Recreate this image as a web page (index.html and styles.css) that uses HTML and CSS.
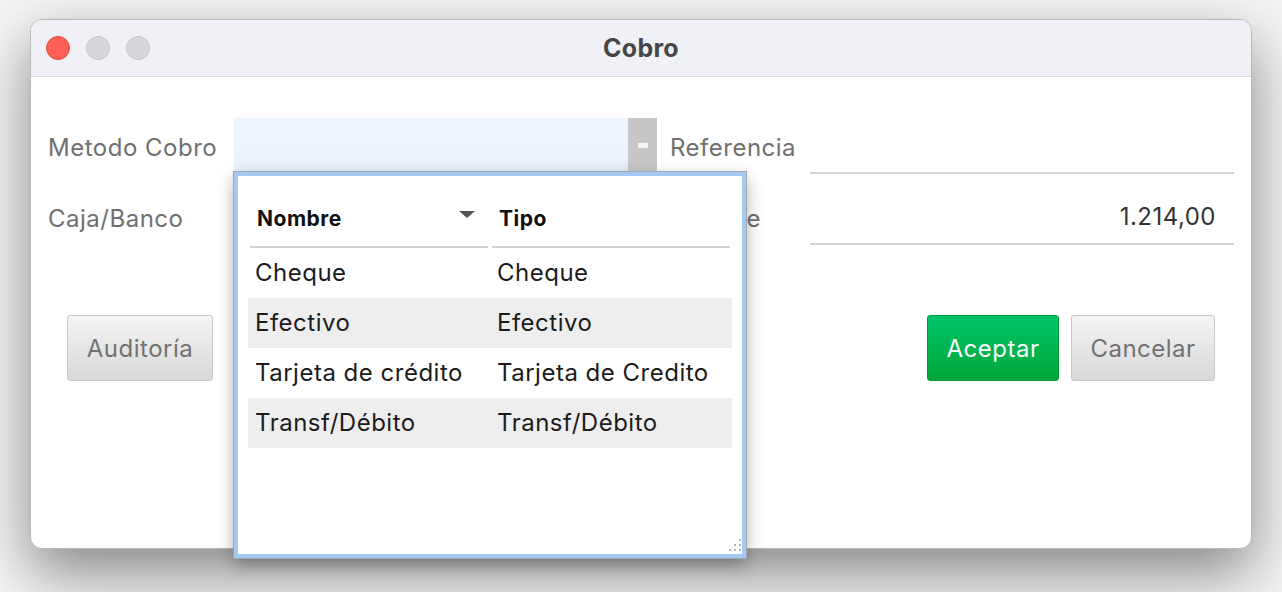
FILE: index.html
```html
<!DOCTYPE html>
<html lang="es">
<head>
    <meta charset="UTF-8">
    <title>Cobro</title>
    <link rel="stylesheet" href="styles.css">
</head>
<body>
    <div class="window">
        <div class="titlebar">
            <div class="lights">
                <span class="light close"></span>
                <span class="light"></span>
                <span class="light"></span>
            </div>
            <div class="title">Cobro</div>
        </div>

        <div class="content">
            <div class="form">
                <label class="label">Metodo Cobro</label>
                <div class="combo">
                    <div class="combo-field"></div>
                    <div class="combo-btn"><span class="dash"></span></div>

                    <!-- dropdown list of the combo -->
                    <div class="popup">
                        <div class="table">
                            <div class="thead">
                                <div class="th">Nombre<span class="sort"></span></div>
                                <div class="th">Tipo</div>
                            </div>
                            <div class="tr"><div class="td">Cheque</div><div class="td">Cheque</div></div>
                            <div class="tr alt"><div class="td">Efectivo</div><div class="td">Efectivo</div></div>
                            <div class="tr"><div class="td">Tarjeta de crédito</div><div class="td">Tarjeta de Credito</div></div>
                            <div class="tr alt"><div class="td">Transf/Débito</div><div class="td">Transf/Débito</div></div>
                        </div>
                        <svg class="grip" width="18" height="18" viewBox="0 0 18 18">
                            <g fill="#b4b4b4">
                                <rect x="15" y="3" width="2" height="2"/>
                                <rect x="10" y="8" width="2" height="2"/>
                                <rect x="15" y="8" width="2" height="2"/>
                                <rect x="5" y="13" width="2" height="2"/>
                                <rect x="10" y="13" width="2" height="2"/>
                                <rect x="15" y="13" width="2" height="2"/>
                            </g>
                        </svg>
                    </div>
                </div>
                <label class="label label-right">Referencia</label>
                <div class="field"></div>

                <label class="label">Caja/Banco</label>
                <div class="field"></div>
                <label class="label label-right">Importe</label>
                <div class="field num">1.214,00</div>
            </div>

            <div class="actions">
                <button class="btn btn-audit">Auditoría</button>
                <div class="spacer"></div>
                <button class="btn btn-primary">Aceptar</button>
                <button class="btn btn-cancel">Cancelar</button>
            </div>
        </div>
    </div>
</body>
</html>
```

FILE: styles.css
```css
* {
    box-sizing: border-box;
}
html {
    background: #f4f4f4;
}
body {
    margin: 0;
    padding: 19px 30px;
    min-height: 592px;
    font-family: Inter, "Noto Sans", sans-serif;
    letter-spacing: 0.5px;
}
.window {
    width: 1222px;
    height: 530px;
    background: white;
    border: 1px solid #b9b9b9;
    border-radius: 12px;
    box-shadow: 0 24px 60px rgba(0,0,0,0.45);
}
.titlebar {
    position: relative;
    height: 57px;
    background: #eff1f6;
    border-bottom: 1px solid #d6d7da;
    border-radius: 11px 11px 0 0;
    display: flex;
    align-items: center;
    justify-content: center;
}
.lights {
    position: absolute;
    left: 15px;
    top: 16px;
    display: flex;
    gap: 16px;
}
.light {
    width: 24px;
    height: 24px;
    border-radius: 50%;
    background: #d6d8dd;
    border: 1px solid #c2c4c8;
}
.light.close {
    background: #fe5f57;
    border-color: #e1483f;
}
.title {
    font-size: 25px;
    font-weight: 700;
    color: #464646;
    letter-spacing: 0.3px;
}
.content {
    padding: 41px 17px 0 17px;
}
.form {
    display: grid;
    grid-template-columns: 186px 423px 153px 424px;
    grid-auto-rows: 56px;
    row-gap: 15px;
    align-items: center;
}
.label {
    padding-top: 3px;
    font-size: 24px;
    color: #707070;
}
.label-right {
    padding-left: 13px;
}
.combo {
    position: relative;
    display: flex;
    height: 54px;
    align-self: start;
}
.combo-field {
    flex: 1;
    background: linear-gradient(#eef5fd 0%, #eef5fd 52%, #e9f0f8 100%);
    border-bottom: 1px dotted #dce3ec;
}
.combo-btn {
    width: 29px;
    background: #c7c7c7;
    display: flex;
    align-items: center;
    justify-content: center;
}
.dash {
    width: 10px;
    height: 5px;
    background: #f4f4f4;
}
.field {
    height: 56px;
    border-bottom: 2px solid #d3d3d3;
    font-size: 24px;
    color: #333;
    display: flex;
    align-items: center;
}
.field.num {
    justify-content: flex-end;
    padding-right: 18px;
}
.popup {
    position: absolute;
    top: 100%;
    left: 0;
    width: 512px;
    height: 386px;
    background: white;
    border: 4px solid #a5c9f0;
    outline: 1px solid #9aa8b8;
    box-shadow: 0 6px 16px rgba(0,0,0,0.32);
    z-index: 5;
}
.table {
    padding: 14px 10px 0 10px;
}
.thead {
    display: grid;
    grid-template-columns: 242px 242px;
    height: 58px;
}
.th {
    position: relative;
    margin: 0 2px;
    padding-left: 7px;
    border-bottom: 2px solid #d2d2d2;
    display: flex;
    align-items: center;
    font-size: 21px;
    font-weight: 700;
    color: #111;
}
.sort {
    position: absolute;
    right: 13px;
    top: 21px;
    border-left: 8px solid transparent;
    border-right: 8px solid transparent;
    border-top: 7px solid #555;
}
.tr {
    display: grid;
    grid-template-columns: 242px 242px;
    height: 50px;
    align-items: center;
}
.tr.alt {
    background: #eeeeee;
}
.td {
    padding-bottom: 1px;
    padding-left: 7px;
    font-size: 24px;
    color: #1c1c1c;
    white-space: nowrap;
}
.grip {
    position: absolute;
    right: 0;
    bottom: 0;
}
.actions {
    display: flex;
    gap: 12px;
    margin-top: 70px;
    padding: 0 19px;
}
.spacer {
    flex: 1;
}
.btn {
    height: 66px;
    padding: 0;
    font-family: inherit;
    font-size: 24px;
    letter-spacing: 0.5px;
    color: #727272;
    background: linear-gradient(#f4f4f4, #d8d8d8);
    border: 1px solid #c9c9c9;
    border-radius: 3px;
}
.btn-audit {
    width: 146px;
}
.btn-primary {
    width: 132px;
    color: white;
    background: linear-gradient(#00c468, #00a63a);
    border-color: #009c34;
}
.btn-cancel {
    width: 144px;
}
```
